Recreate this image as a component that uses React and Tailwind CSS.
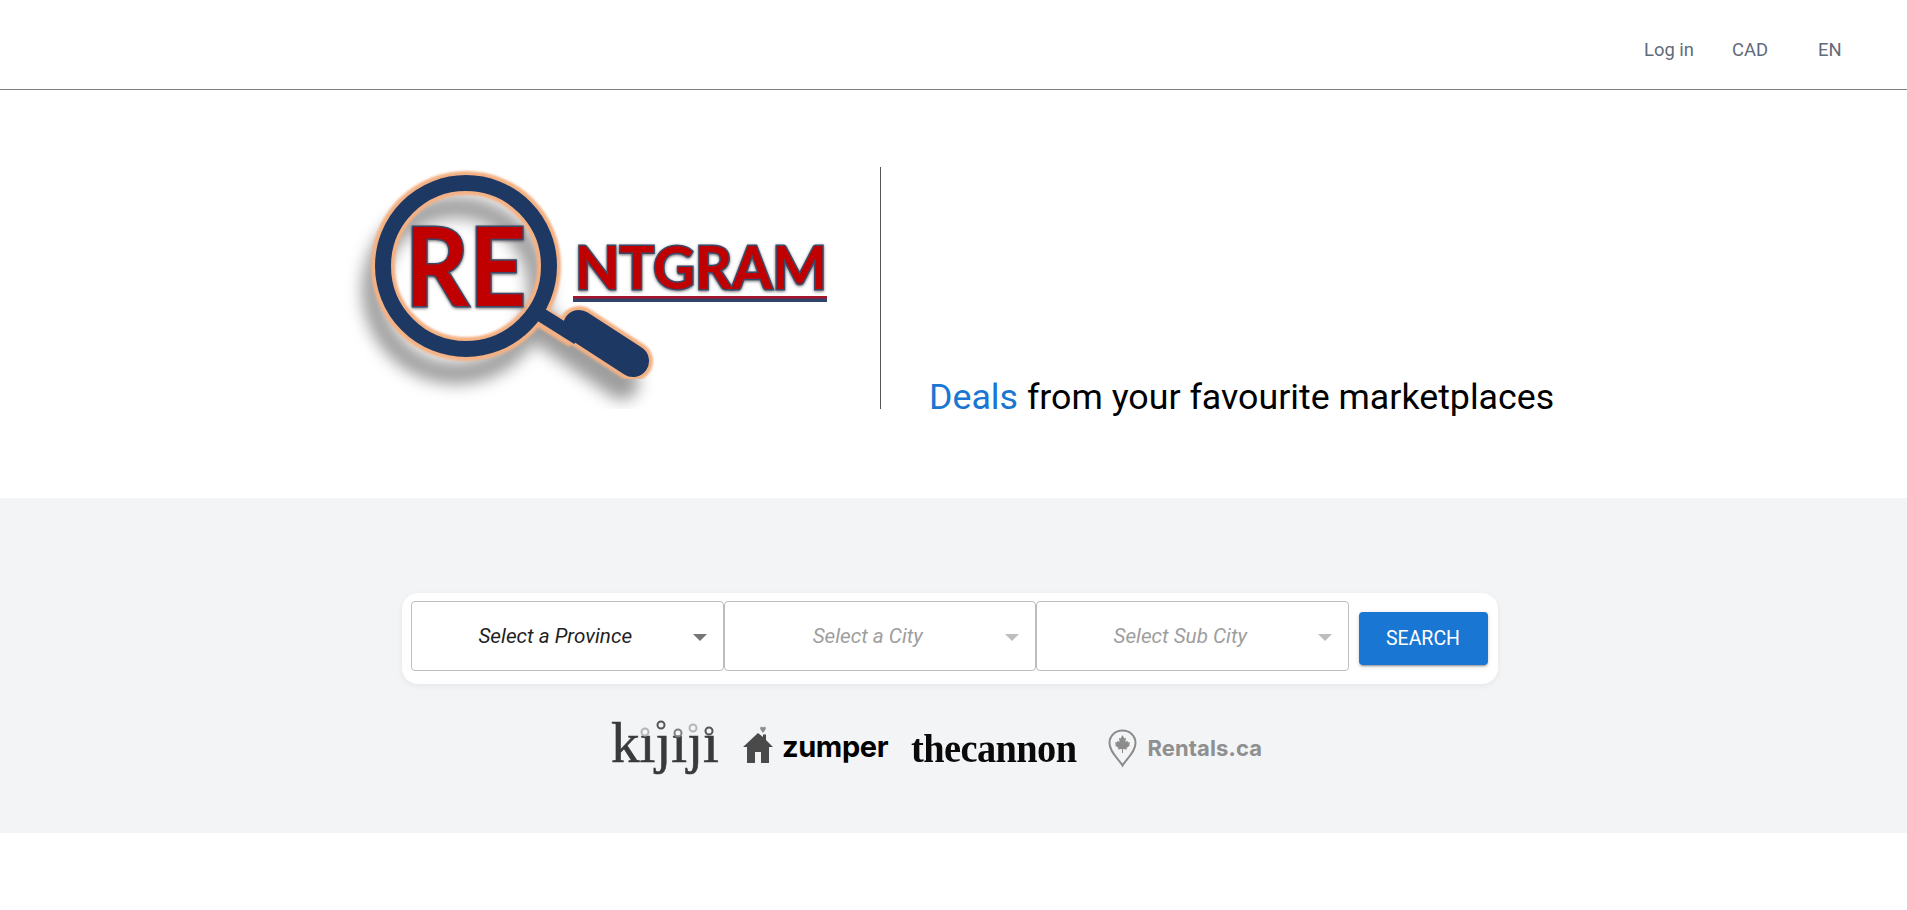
import React from "react";

// Logo drawing, page coordinates minus the svg origin (345, 167)
const RentgramLogo = () => (
  <svg width="500" height="242" viewBox="345 167 500 242" className="block">
    <defs>
      <filter id="soft" x="-30%" y="-30%" width="160%" height="160%">
        <feGaussianBlur stdDeviation="8" />
      </filter>
      <filter id="txt" x="-10%" y="-10%" width="120%" height="130%">
        <feDropShadow dx="0" dy="1" stdDeviation="1.5" floodColor="#444" floodOpacity="0.8" />
      </filter>
      <filter id="rough">
        <feGaussianBlur stdDeviation="0.9" />
      </filter>
      <filter id="slight">
        <feGaussianBlur stdDeviation="0.5" />
      </filter>
    </defs>

    {/* shadow */}
    <g filter="url(#soft)" opacity="0.72" transform="translate(-10 24)">
      <circle cx="466" cy="266" r="83" fill="none" stroke="#777" strokeWidth="22" />
      <path d="M551 303 L632 359" stroke="#777" strokeWidth="34" strokeLinecap="round" />
    </g>

    {/* peach edge */}
    <g filter="url(#rough)">
      <circle cx="466" cy="266" r="83" fill="none" stroke="#f4b183" strokeWidth="24" />
      <path d="M540 316 L575 338" stroke="#f4b183" strokeWidth="21" />
      <path d="M579 326 L633 361" stroke="#f4b183" strokeWidth="40" strokeLinecap="round" />
    </g>

    {/* navy ring and handle */}
    <g filter="url(#slight)">
      <circle cx="466" cy="266" r="83" fill="none" stroke="#1f3864" strokeWidth="16" />
      <path d="M535 311 L578 338" stroke="#1f3864" strokeWidth="14" />
      <path d="M579 326 L633 361" stroke="#1f3864" strokeWidth="32" strokeLinecap="round" />
    </g>

    {/* lettering */}
    <g
      filter="url(#txt)"
      fontFamily="Lato, 'Open Sans', sans-serif"
      fontWeight="700"
      fill="#c00000"
      stroke="#3b4a68"
      strokeWidth="3"
      paintOrder="stroke"
    >
      <text x="405" y="306" fontSize="110" textLength="121" lengthAdjust="spacingAndGlyphs">
        RE
      </text>
      <text x="575" y="289" fontSize="60" textLength="252" lengthAdjust="spacingAndGlyphs">
        NTGRAM
      </text>
    </g>
    <rect x="573" y="296" width="254" height="6" fill="#2f4468" />
    <rect x="573" y="296" width="254" height="2.5" fill="#a5142a" />
  </svg>
);

const Caret = ({ muted }) => (
  <svg width="14" height="7" viewBox="0 0 14 7" className="absolute right-[16px] top-[32px]">
    <path d="M0 0 L14 0 L7 7 Z" fill={muted ? "#bdbdbd" : "#757575"} />
  </svg>
);

const SelectBox = ({ label, muted }) => (
  <div
    className={`relative flex h-[70px] w-[312.5px] items-center justify-center rounded-[4px] border border-[#bdbdbd] bg-white pr-[24px] pt-[2px] text-[20.7px] italic ${
      muted ? "text-[#9e9e9e]" : "text-[#1f1f1f]"
    }`}
  >
    {label}
    <Caret muted={muted} />
  </div>
);

const kijijiRings = [
  { x: 34, y: 12, c: "#b5b5b5" },
  { x: 50, y: 5, c: "#555555" },
  { x: 67, y: 13, c: "#808080" },
  { x: 82, y: 8, c: "#b5b5b5" },
  { x: 98, y: 11, c: "#555555" },
];

const KijijiLogo = () => (
  <svg width="110" height="56" viewBox="0 0 110 56" className="block overflow-visible">
    <text
      x="0"
      y="42"
      fontFamily="'Liberation Serif', serif"
      fontSize="58"
      fill="#3a3a3a"
      stroke="#3a3a3a"
      strokeWidth="0.6"
      textLength="108"
      lengthAdjust="spacingAndGlyphs"
    >
      {"k\u0131\u0237\u0131\u0237\u0131"}
    </text>
    {kijijiRings.map((r) => (
      <circle key={r.x} cx={r.x} cy={r.y} r="3.5" fill="none" stroke={r.c} strokeWidth="2" />
    ))}
  </svg>
);

const ZumperLogo = () => (
  <div className="flex items-center gap-[9px]">
    <svg width="30" height="38" viewBox="0 0 30 38" className="mt-[-6px]">
      <path d="M20 1.5c-1.3-1.6-3.6-.4-2.6 1.7L20 7l2.6-3.8c1-2.1-1.3-3.3-2.6-1.7z" fill="#8c8c8c" />
      <path d="M15 7 L20 11 L20 8.5 L23 8.5 L23 14 L30 21 L26 21 L26 37 L18 37 L18 26 L12 26 L12 37 L4 37 L4 21 L0 21 Z" fill="#4a4a4a" />
    </svg>
    <span className="mt-[-4px] font-['Inter',sans-serif] text-[29px] font-bold leading-none tracking-[-0.4px] text-black">
      zumper
    </span>
  </div>
);

const CannonLogo = () => (
  <span className="block origin-left scale-x-[0.96] pt-[2px] font-['Liberation_Serif',serif] text-[40px] font-bold leading-none tracking-[-0.6px] text-[#0a0a0a]">
    thecannon
  </span>
);

const RentalsLogo = () => (
  <div className="flex items-center gap-[11px]">
    <svg width="29" height="40" viewBox="0 0 29 38">
      <path
        d="M14.5 36.5 C10 29 1.5 23 1.5 14 C1.5 6.5 7.5 1.5 14.5 1.5 C21.5 1.5 27.5 6.5 27.5 14 C27.5 23 19 29 14.5 36.5 Z"
        fill="none"
        stroke="#8c8c8c"
        strokeWidth="2"
      />
      <path
        d="M14.5 6 L16.4 9.5 L18 8.8 L17.4 13 L19.4 11.8 L20 13.4 L22 13 L21.2 15.6 L22 16.2 L18.6 19 L19 20.4 L15 20 L15 24 L14 24 L14 20 L10 20.4 L10.4 19 L7 16.2 L7.8 15.6 L7 13 L9 13.4 L9.6 11.8 L11.6 13 L11 8.8 L12.6 9.5 Z"
        fill="#8c8c8c"
      />
    </svg>
    <span className="font-['Inter',sans-serif] text-[22px] font-bold leading-none tracking-[0.1px] text-[#8f8f8f]">
      Rentals.ca
    </span>
  </div>
);

export default function App() {
  return (
    <div className="min-h-[910px] bg-white font-['Roboto',sans-serif]">
      {/* Top nav */}
      <header className="flex h-[90px] items-center border-b border-[#7f7f7f] pt-[11px] text-[18.4px] text-[#5f6b7a]">
        <div className="ml-[1644px] flex">
          <span className="w-[88px]">Log in</span>
          <span className="w-[86px]">CAD</span>
          <span>EN</span>
        </div>
      </header>

      {/* Hero */}
      <section className="flex h-[408px] pl-[345px] pt-[77px]">
        <div className="h-[242px] w-[535px]">
          <RentgramLogo />
        </div>
        <div className="flex h-[242px] items-end border-l border-[#555] pl-[48px] text-[35.75px] leading-[40px] text-black">
          <p className="-mb-[8px]">
            <span className="text-[#1976d2]">Deals</span> from your favourite marketplaces
          </p>
        </div>
      </section>

      {/* Search band */}
      <section className="h-[335px] bg-[#f3f4f6] pl-[402px] pt-[95px]">
        <div className="flex h-[91px] w-[1096px] items-start rounded-[16px] bg-white pl-[9px] pt-[8px] shadow-[0_2px_6px_rgba(0,0,0,0.06)]">
          <SelectBox label="Select a Province" />
          <SelectBox label="Select a City" muted />
          <SelectBox label="Select Sub City" muted />
          <button className="ml-[10px] mt-[11px] h-[53px] w-[129px] rounded-[4px] bg-[#1976d2] text-[19.5px] font-normal text-white shadow-[0_3px_1px_-2px_rgba(0,0,0,0.2),0_2px_2px_0_rgba(0,0,0,0.14),0_1px_5px_0_rgba(0,0,0,0.12)]">
            SEARCH
          </button>
        </div>

        <div className="mt-[37px] flex h-[54px] items-center pl-[209px]">
          <KijijiLogo />
          <div className="ml-[22px]">
            <ZumperLogo />
          </div>
          <div className="ml-[23px]">
            <CannonLogo />
          </div>
          <div className="ml-[24px]">
            <RentalsLogo />
          </div>
        </div>
      </section>
    </div>
  );
}
